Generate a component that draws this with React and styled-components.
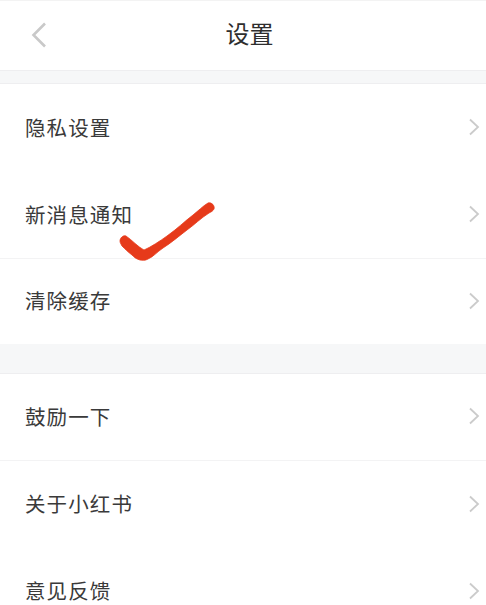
import React from 'react';
import styled, { createGlobalStyle } from 'styled-components';

const GlobalStyle = createGlobalStyle`
  html, body {
    margin: 0;
    padding: 0;
    background: #fff;
  }
  body {
    font-family: "Noto Sans CJK SC", "Noto Sans", sans-serif;
  }
`;

const groups = [
  [
    { label: '隐私设置', height: 88 },
    { label: '新消息通知', height: 87, divided: true, checked: true },
    { label: '清除缓存', height: 85 },
  ],
  [
    { label: '鼓励一下', height: 87, divided: true },
    { label: '关于小红书', height: 87 },
    { label: '意见反馈', height: 87 },
  ],
];

const BackIcon = () => (
  <svg width="18" height="28" viewBox="0 0 18 28" fill="none">
    <path d="M15 2.5 L3.5 14 L15 25.5" stroke="#c9c9c9" strokeWidth="2.6" />
  </svg>
);

const ChevronIcon = () => (
  <svg width="12" height="18" viewBox="0 0 12 18" fill="none">
    <path d="M2 1.5 L10 9 L2 16.5" stroke="#cbcbcb" strokeWidth="1.8" />
  </svg>
);

const HandDrawnCheck = () => (
  <CheckMark width="104" height="64" viewBox="0 0 104 64">
    <path
      d="M5 41 C5 38 8 35 11 36 C17 40 23 47 29 50 C36 47 45 41 52 36 C62 29 70 21 78 15 C83 11 88 6 93 3 C97 2 100 6 99 9 C98 11 96 12 94 13 C86 18 79 25 72 30 C64 36 56 43 48 48 C42 52 38 57 33 59 C30 61 27 60 25 60 C21 59 19 57 17 55 C13 52 10 49 7 46 C6 44 5 43 5 41 Z"
      fill="#e63a1a"
      stroke="#e63a1a"
      strokeWidth="0.8"
      strokeLinejoin="round"
    />
  </CheckMark>
);

const App = () => (
  <Page>
    <GlobalStyle />
    <Header>
      <BackButton>
        <BackIcon />
      </BackButton>
      <Title>设置</Title>
    </Header>
    <Band $height={14} $topLine />
    {groups.map((rows, groupIndex) => (
      <React.Fragment key={rows[0].label}>
        {groupIndex > 0 && <Band $height={30} />}
        <Group>
          {rows.map(({ label, height, divided, checked }) => (
            <Row key={label} $height={height} $divided={divided}>
              <RowLabel>{label}</RowLabel>
              <ChevronIcon />
              {checked && <HandDrawnCheck />}
            </Row>
          ))}
        </Group>
      </React.Fragment>
    ))}
  </Page>
);

const Page = styled.div`
  width: 486px;
  height: 605px;
  overflow: hidden;
  background: #fff;
`;

const Header = styled.header`
  position: relative;
  display: flex;
  justify-content: center;
  align-items: center;
  height: 70px;
  box-sizing: border-box;
  border-top: 1px solid #f3f3f3;
`;

const BackButton = styled.div`
  position: absolute;
  left: 30px;
  top: 20px;
  display: flex;
`;

const Title = styled.h1`
  margin: -5px 0 0 13px;
  font-size: 24px;
  font-weight: 400;
  line-height: 1;
  color: #2e2e2e;
`;

const Band = styled.div`
  height: ${({ $height }) => $height}px;
  box-sizing: border-box;
  background: #f6f7f8;
  border-top: ${({ $topLine }) => ($topLine ? '1px solid #eeeef0' : 'none')};
  border-bottom: 1px solid #eeeef0;
`;

const Group = styled.section`
  display: flex;
  flex-direction: column;
`;

const Row = styled.div`
  position: relative;
  display: flex;
  justify-content: space-between;
  align-items: center;
  height: ${({ $height }) => $height}px;
  box-sizing: border-box;
  padding: 0 6px 2px 25px;
  border-bottom: ${({ $divided }) => ($divided ? '1px solid #f3f3f4' : 'none')};
`;

const RowLabel = styled.span`
  font-size: 20.5px;
  letter-spacing: 1.1px;
  line-height: 1;
  color: #3a3a3a;
`;

const CheckMark = styled.svg`
  position: absolute;
  left: 115px;
  top: 28px;
`;

export default App;
